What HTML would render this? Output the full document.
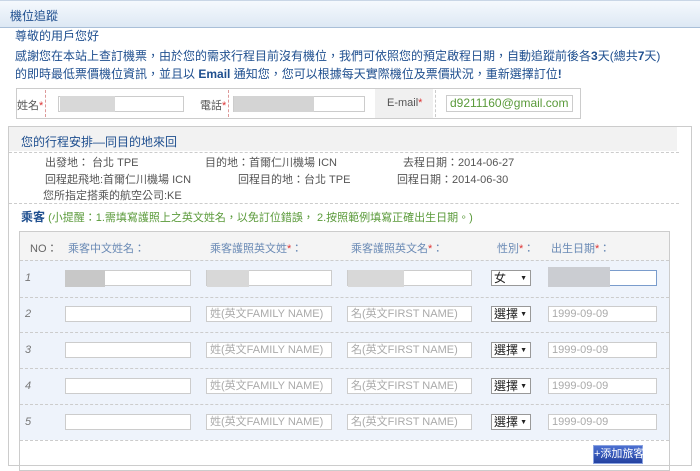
<!DOCTYPE html>
<html><head><meta charset="utf-8"><style>
*{margin:0;padding:0;box-sizing:border-box}
body{width:700px;height:464px;overflow:hidden;background:#fff;font-family:"Liberation Sans","Noto Sans CJK TC",sans-serif;font-size:11px;color:#555;position:relative}
.a{position:absolute;white-space:nowrap}
.hdr{left:0;top:0;width:700px;height:28px;background:linear-gradient(#f5f9fd,#dde8f4);border-top:1px solid #c9d6e6;border-bottom:1px solid #a9bfd8}
.blue{color:#1f4f8f}
.inp{position:absolute;height:16px;border:1px solid #ccc;background:#fff;font-size:11px;color:#aaa;padding-left:3px;line-height:14px}
.dot{position:absolute;border-top:1px dashed #ccc}
.vd{position:absolute;border-left:1px dashed #d99;}
.red{color:#d33}
.sel{position:absolute;height:16px;border:1px solid #999;background:#fff;font-size:12px;color:#222;line-height:14px;padding-left:2px}
.sel:after{content:"▼";position:absolute;right:3px;top:1px;font-size:7px}
.gb{position:absolute;background:#ccc}
</style></head><body>
<div class="a hdr"></div>
<div class="a blue" style="left:10px;top:7px;font-size:12px">機位追蹤</div>
<div class="a blue" style="left:15px;top:27px;font-size:12px">尊敬的用戶您好</div>
<div class="a blue" style="left:15px;top:47px;font-size:12px">感謝您在本站上查訂機票，由於您的需求行程目前沒有機位，我們可依照您的預定啟程日期，自動追蹤前後各<b>3</b>天(總共<b>7</b>天)</div>
<div class="a blue" style="left:15px;top:65px;font-size:12px">的即時最低票價機位資訊，並且以 <b>Email</b> 通知您，您可以根據每天實際機位及票價狀況，重新選擇訂位<b>!</b></div>

<div class="a" style="left:16px;top:88px;width:565px;height:31px;border:1px solid #ccc"></div>
<div class="a" style="left:17px;top:97px">姓名<span class="red">*</span></div>
<div class="vd" style="left:45px;top:90px;height:27px"></div>
<div class="inp" style="left:58px;top:96px;width:126px"></div>
<div class="gb" style="left:60px;top:96px;width:55px;height:16px;background:#d8d8d8"></div>
<div class="a" style="left:200px;top:97px">電話<span class="red">*</span></div>
<div class="vd" style="left:228px;top:90px;height:27px"></div>
<div class="inp" style="left:233px;top:96px;width:132px"></div>
<div class="gb" style="left:234px;top:96px;width:80px;height:16px;background:#d4d4d4"></div>
<div class="a" style="left:375px;top:89px;width:58px;height:29px;background:#f0f0f0"></div>
<div class="a" style="left:387px;top:97px">E-mail<span class="red">*</span></div>
<div class="vd" style="left:435px;top:90px;height:27px;border-color:#ccc"></div>
<div class="inp" style="left:446px;top:95px;width:127px;height:17px;color:#5a9a3a;font-size:12px">d9211160@gmail.com</div>

<div class="a" style="left:8px;top:126px;width:684px;height:340px;border:1px solid #ccc"></div>
<div class="a" style="left:9px;top:127px;width:668px;height:24px;background:#f2f2f2"></div>
<div class="a blue" style="left:21px;top:133px;font-size:12px">您的行程安排—同目的地來回</div>
<div class="dot" style="left:9px;top:152px;width:670px"></div>
<div class="a" style="left:45px;top:154px">出發地： 台北 TPE</div>
<div class="a" style="left:205px;top:154px">目的地：首爾仁川機場 ICN</div>
<div class="a" style="left:403px;top:154px">去程日期：2014-06-27</div>
<div class="a" style="left:45px;top:171px">回程起飛地:首爾仁川機場 ICN</div>
<div class="a" style="left:238px;top:171px">回程目的地：台北 TPE</div>
<div class="a" style="left:397px;top:171px">回程日期：2014-06-30</div>
<div class="a" style="left:43px;top:187px">您所指定搭乘的航空公司:KE</div>
<div class="dot" style="left:9px;top:203px;width:670px"></div>
<div class="a" style="left:21px;top:208px"><b class="blue" style="font-size:12px">乘客</b> <span style="color:#5a9a3a">(小提醒：1.需填寫護照上之英文姓名，以免訂位錯誤， 2.按照範例填寫正確出生日期。)</span></div>

<div class="a" style="left:19px;top:231px;width:651px;height:240px;border:1px solid #ccc"></div>
<div class="a" style="left:20px;top:232px;width:649px;height:28px;background:#f4f4f4"></div>
<div class="a" style="left:20px;top:260px;width:649px;height:180px;background:#eef3fb"></div>
<div class="a" style="left:30px;top:240px;color:#666">NO：</div>
<div class="a blue" style="left:68px;top:240px;color:#6a8ab5">乘客中文姓名：</div>
<div class="a" style="left:210px;top:240px;color:#6a8ab5">乘客護照英文姓<span class="red">*</span>：</div>
<div class="a" style="left:351px;top:240px;color:#6a8ab5">乘客護照英文名<span class="red">*</span>：</div>
<div class="a" style="left:497px;top:240px;color:#6a8ab5">性別<span class="red">*</span>：</div>
<div class="a" style="left:551px;top:240px;color:#6a8ab5">出生日期<span class="red">*</span>：</div>
<div class="dot" style="left:20px;top:260px;width:649px"></div>
<div class="dot" style="left:20px;top:297px;width:649px"></div>
<div class="dot" style="left:20px;top:332px;width:649px"></div>
<div class="dot" style="left:20px;top:368px;width:649px"></div>
<div class="dot" style="left:20px;top:404px;width:649px"></div>
<div class="dot" style="left:20px;top:440px;width:649px"></div>

<div class="a" style="left:25px;top:272px;font-style:italic;color:#777">1</div>
<div class="inp" style="left:65px;top:270px;width:126px"></div>
<div class="gb" style="left:65px;top:270px;width:40px;height:17px;background:#c8c8c8"></div>
<div class="inp" style="left:206px;top:270px;width:126px"></div>
<div class="gb" style="left:207px;top:270px;width:42px;height:17px;background:#d8d8d8"></div>
<div class="inp" style="left:347px;top:270px;width:125px"></div>
<div class="gb" style="left:348px;top:270px;width:56px;height:17px;background:#d8d8d8"></div>
<div class="sel" style="left:491px;top:270px;width:40px">女</div>
<div class="inp" style="left:548px;top:270px;width:109px;border-color:#7a9ccc"></div>
<div class="gb" style="left:548px;top:267px;width:62px;height:20px;background:#cbcdd2"></div>

<div class="a" style="left:25px;top:308px;font-style:italic;color:#777">2</div>
<div class="inp" style="left:65px;top:306px;width:126px"></div>
<div class="inp" style="left:206px;top:306px;width:126px">姓(英文FAMILY NAME)</div>
<div class="inp" style="left:347px;top:306px;width:125px">名(英文FIRST NAME)</div>
<div class="sel" style="left:491px;top:306px;width:40px">選擇</div>
<div class="inp" style="left:548px;top:306px;width:109px">1999-09-09</div>

<div class="a" style="left:25px;top:344px;font-style:italic;color:#777">3</div>
<div class="inp" style="left:65px;top:342px;width:126px"></div>
<div class="inp" style="left:206px;top:342px;width:126px">姓(英文FAMILY NAME)</div>
<div class="inp" style="left:347px;top:342px;width:125px">名(英文FIRST NAME)</div>
<div class="sel" style="left:491px;top:342px;width:40px">選擇</div>
<div class="inp" style="left:548px;top:342px;width:109px">1999-09-09</div>

<div class="a" style="left:25px;top:380px;font-style:italic;color:#777">4</div>
<div class="inp" style="left:65px;top:378px;width:126px"></div>
<div class="inp" style="left:206px;top:378px;width:126px">姓(英文FAMILY NAME)</div>
<div class="inp" style="left:347px;top:378px;width:125px">名(英文FIRST NAME)</div>
<div class="sel" style="left:491px;top:378px;width:40px">選擇</div>
<div class="inp" style="left:548px;top:378px;width:109px">1999-09-09</div>

<div class="a" style="left:25px;top:416px;font-style:italic;color:#777">5</div>
<div class="inp" style="left:65px;top:414px;width:126px"></div>
<div class="inp" style="left:206px;top:414px;width:126px">姓(英文FAMILY NAME)</div>
<div class="inp" style="left:347px;top:414px;width:125px">名(英文FIRST NAME)</div>
<div class="sel" style="left:491px;top:414px;width:40px">選擇</div>
<div class="inp" style="left:548px;top:414px;width:109px">1999-09-09</div>

<div class="a" style="left:593px;top:445px;width:50px;height:19px;background:linear-gradient(#4b6fd0,#2341a0);border:1px solid #8aa2e0;color:#fff;font-size:11px;line-height:17px;text-align:center">+添加旅客</div>
</body></html>
